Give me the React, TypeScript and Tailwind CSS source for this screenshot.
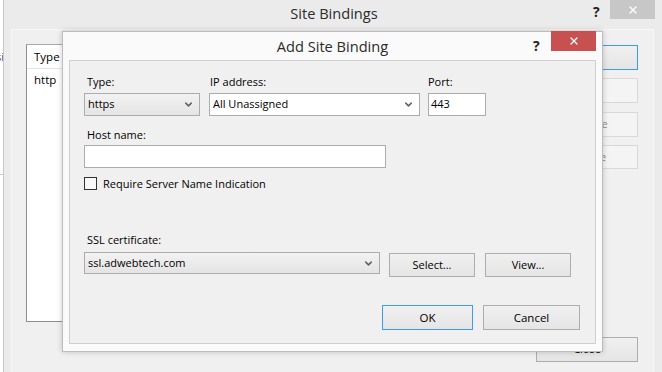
import { ChevronDown, X } from "lucide-react";

const Btn = ({
  label,
  className,
  primary,
  disabled,
}: {
  label: string;
  className: string;
  primary?: boolean;
  disabled?: boolean;
}) => {
  return (
    <div
      className={`flex items-center justify-center border bg-gradient-to-b from-[#f0f0f0] to-[#e5e5e5] ${
        primary ? "border-[#3c9cf0]" : disabled ? "border-[#d9d9d9] from-[#f4f4f4] to-[#f4f4f4]" : "border-[#adadad]"
      } ${disabled ? "text-[#8a8a8a]" : "text-black"} ${className}`}
    >
      {label}
    </div>
  );
};

const Combo = ({ value, className, white }: { value: string; className: string; white?: boolean }) => {
  return (
    <div
      className={`flex items-center justify-between border border-[#acacac] pl-[3px] pr-[5px] ${
        white ? "bg-white" : "bg-gradient-to-b from-[#f2f2f2] to-[#e4e4e4]"
      } ${className}`}
    >
      <span>{value}</span>
      <ChevronDown size={11} strokeWidth={3.2} className="text-[#5f5f5f]" />
    </div>
  );
};

const AddSiteBinding = () => {
  return (
    <div className="absolute left-[62px] top-[31px] flex h-[321px] w-[541px] flex-col border border-[#bdbdbd] bg-[#fafafa] shadow-[0_0_6px_rgba(0,0,0,0.2)]">
      <div className="relative flex h-[28px] items-center justify-center">
        <span className="pt-[1px] text-[14.6px] text-[#2b2b2b]">Add Site Binding</span>
        <span className="absolute left-[470px] top-[3px] text-[14px] font-bold text-[#222]">?</span>
        <div className="absolute right-[6px] top-[-1px] flex h-[20px] w-[45px] items-center justify-center bg-[#c75050]">
          <X size={12} strokeWidth={2.6} className="text-white" />
        </div>
      </div>
      <div className="mx-[6px] mb-[7px] flex flex-1 flex-col border border-[#cfcfcf] bg-[#f0f0f0] pl-[14px] pt-[13px] text-[11px] text-black">
        <div className="flex">
          <div className="flex w-[116px] flex-col gap-[3px]">
            <span className="h-[16px] pl-[3px] leading-[16px]">Type:</span>
            <Combo value="https" className="h-[23px]" />
          </div>
          <div className="ml-[9px] flex w-[211px] flex-col gap-[3px]">
            <span className="h-[16px] pl-[1px] leading-[16px]">IP address:</span>
            <Combo value="All Unassigned" className="h-[23px]" white />
          </div>
          <div className="ml-[8px] flex w-[58px] flex-col gap-[3px]">
            <span className="h-[16px] leading-[16px]">Port:</span>
            <div className="flex h-[23px] items-center border border-[#acacac] bg-white pl-[2px]">443</div>
          </div>
        </div>
        <div className="mt-[11px] flex w-[302px] flex-col gap-[2px]">
          <span className="h-[16px] pl-[3px] leading-[16px]">Host name:</span>
          <div className="h-[23px] border border-[#acacac] bg-white" />
        </div>
        <div className="mt-[9px] flex items-center gap-[6px]">
          <div className="h-[13px] w-[13px] border border-[#333] bg-[#f8f8f8]" />
          <span className="leading-[13px]">Require Server Name Indication</span>
        </div>
        <div className="mt-[42px] flex flex-col gap-[4px]">
          <span className="h-[16px] pl-[3px] leading-[16px]">SSL certificate:</span>
          <div className="flex items-start">
            <Combo value="ssl.adwebtech.com" className="h-[22px] w-[296px]" />
            <Btn label="Select..." className="ml-[9px] mt-[1px] h-[24px] w-[86px]" />
            <Btn label="View..." className="ml-[10px] mt-[1px] h-[24px] w-[86px]" />
          </div>
        </div>
        <div className="mt-[28px] flex justify-end gap-[10px] pr-[15px]">
          <Btn label="OK" className="h-[25px] w-[91px] text-[11.5px]" primary />
          <Btn label="Cancel" className="h-[25px] w-[97px] text-[11.5px]" />
        </div>
      </div>
    </div>
  );
};

export default function App() {
  return (
    <div className="relative flex h-[372px] w-[662px] overflow-hidden bg-white font-['Open_Sans',sans-serif] text-[11px]">
      <div className="relative w-[3px] shrink-0 overflow-hidden">
        <span className="absolute right-[-1px] top-[49px] text-[11px] text-[#2a3b8f]">si</span>
        <div className="absolute left-0 top-[174px] h-[1px] w-[3px] bg-[#b8cbe8]" />
      </div>
      <div className="flex flex-1 flex-col border-l border-[#c9c9c9] bg-[#ebebeb]">
        <div className="relative flex h-[29px] items-center justify-center">
          <span className="pb-[1px] pl-[2px] text-[14.6px] text-[#2b2b2b]">Site Bindings</span>
          <span className="absolute left-[589px] top-[1px] text-[14px] font-bold text-[#222]">?</span>
          <div className="absolute left-[606px] top-0 flex h-[19px] w-[45px] items-center justify-center bg-[#c7c7c7]">
            <X size={12} strokeWidth={2.6} className="text-white" />
          </div>
        </div>
        <div className="ml-[7px] mr-[8px] flex flex-1 flex-col border-l border-r border-t border-[#f7f7f7] bg-[#f0f0f0] pl-[14px] pr-[15px] pt-[14px]">
          <div className="flex">
            <div className="flex h-[278px] flex-1 flex-col border border-[#8b8f96] border-t-[#a8a8a8] bg-white">
              <div className="flex h-[24px] items-center border-b border-[#e5e5e5] pl-[7px] text-[11.5px]">Type</div>
              <div className="flex h-[22px] items-center pl-[7px] text-[11.5px]">http</div>
            </div>
            <div className="ml-[10px] flex w-[102px] flex-col">
              <Btn label="Add..." className="mt-[1px] h-[25px]" primary />
              <Btn label="Edit..." className="mt-[8px] h-[25px]" disabled />
              <Btn label="Remove" className="mt-[9px] h-[25px]" disabled />
              <Btn label="Browse" className="mt-[8px] h-[24px]" disabled />
            </div>
          </div>
          <div className="mt-[15px] flex justify-end">
            <Btn label="Close" className="h-[25px] w-[102px]" />
          </div>
        </div>
      </div>
      <AddSiteBinding />
    </div>
  );
}
